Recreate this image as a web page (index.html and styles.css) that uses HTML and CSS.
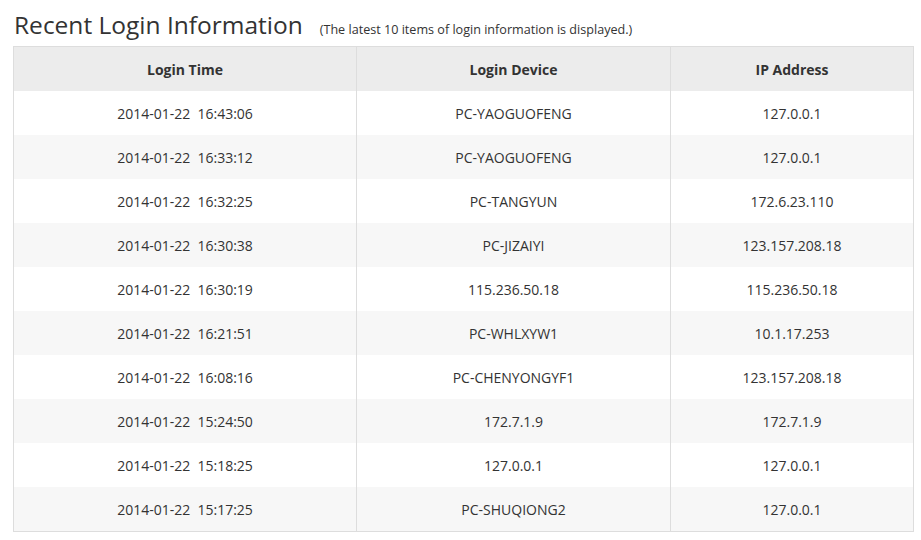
FILE: index.html
```html
<!DOCTYPE html>
<html>
<head>
<meta charset="utf-8">
<link rel="stylesheet" href="styles.css">
</head>
<body>
<div class="page">
  <div class="title-row">
    <h1 class="title">Recent Login Information</h1>
    <span class="subtitle">(The latest 10 items of login information is displayed.)</span>
  </div>
  <table class="log">
    <colgroup>
      <col class="c1"><col class="c2"><col class="c3">
    </colgroup>
    <thead>
      <tr><th>Login Time</th><th>Login Device</th><th>IP Address</th></tr>
    </thead>
    <tbody>
      <tr><td>2014-01-22&nbsp;&nbsp;16:43:06</td><td>PC-YAOGUOFENG</td><td>127.0.0.1</td></tr>
      <tr><td>2014-01-22&nbsp;&nbsp;16:33:12</td><td>PC-YAOGUOFENG</td><td>127.0.0.1</td></tr>
      <tr><td>2014-01-22&nbsp;&nbsp;16:32:25</td><td>PC-TANGYUN</td><td>172.6.23.110</td></tr>
      <tr><td>2014-01-22&nbsp;&nbsp;16:30:38</td><td>PC-JIZAIYI</td><td>123.157.208.18</td></tr>
      <tr><td>2014-01-22&nbsp;&nbsp;16:30:19</td><td>115.236.50.18</td><td>115.236.50.18</td></tr>
      <tr><td>2014-01-22&nbsp;&nbsp;16:21:51</td><td>PC-WHLXYW1</td><td>10.1.17.253</td></tr>
      <tr><td>2014-01-22&nbsp;&nbsp;16:08:16</td><td>PC-CHENYONGYF1</td><td>123.157.208.18</td></tr>
      <tr><td>2014-01-22&nbsp;&nbsp;15:24:50</td><td>172.7.1.9</td><td>172.7.1.9</td></tr>
      <tr><td>2014-01-22&nbsp;&nbsp;15:18:25</td><td>127.0.0.1</td><td>127.0.0.1</td></tr>
      <tr><td>2014-01-22&nbsp;&nbsp;15:17:25</td><td>PC-SHUQIONG2</td><td>127.0.0.1</td></tr>
    </tbody>
  </table>
</div>
</body>
</html>
```
FILE: styles.css
```css
html, body {
  margin: 0;
  padding: 0;
  background: #fff;
}
.page {
  padding: 8px 8px 0 13px;
  font-family: "Open Sans", "Noto Sans", sans-serif;
  color: #333;
}
.title-row {
  display: flex;
  align-items: baseline;
  height: 38px;
}
.title {
  margin: 0;
  font-weight: normal;
  font-size: 24.5px;
  line-height: 34px;
  color: #333;
  padding-left: 1px;
}
.subtitle {
  font-size: 12.6px;
  margin-left: 17px;
  color: #333;
}
.log {
  width: 900px;
  border-collapse: collapse;
  border: 1px solid #ddd;
  table-layout: fixed;
}
.c1 { width: 343px; }
.c2 { width: 314px; }
.c3 { width: 243px; }
.log th, .log td {
  height: 44px;
  padding: 0;
  text-align: center;
  font-size: 14px;
  border-left: 1px solid #ddd;
  border-right: 1px solid #ddd;
}
.log th {
  background: #ececec;
  font-weight: bold;
  color: #333;
}
.log tbody tr:nth-child(even) td {
  background: #f7f7f7;
}
```
